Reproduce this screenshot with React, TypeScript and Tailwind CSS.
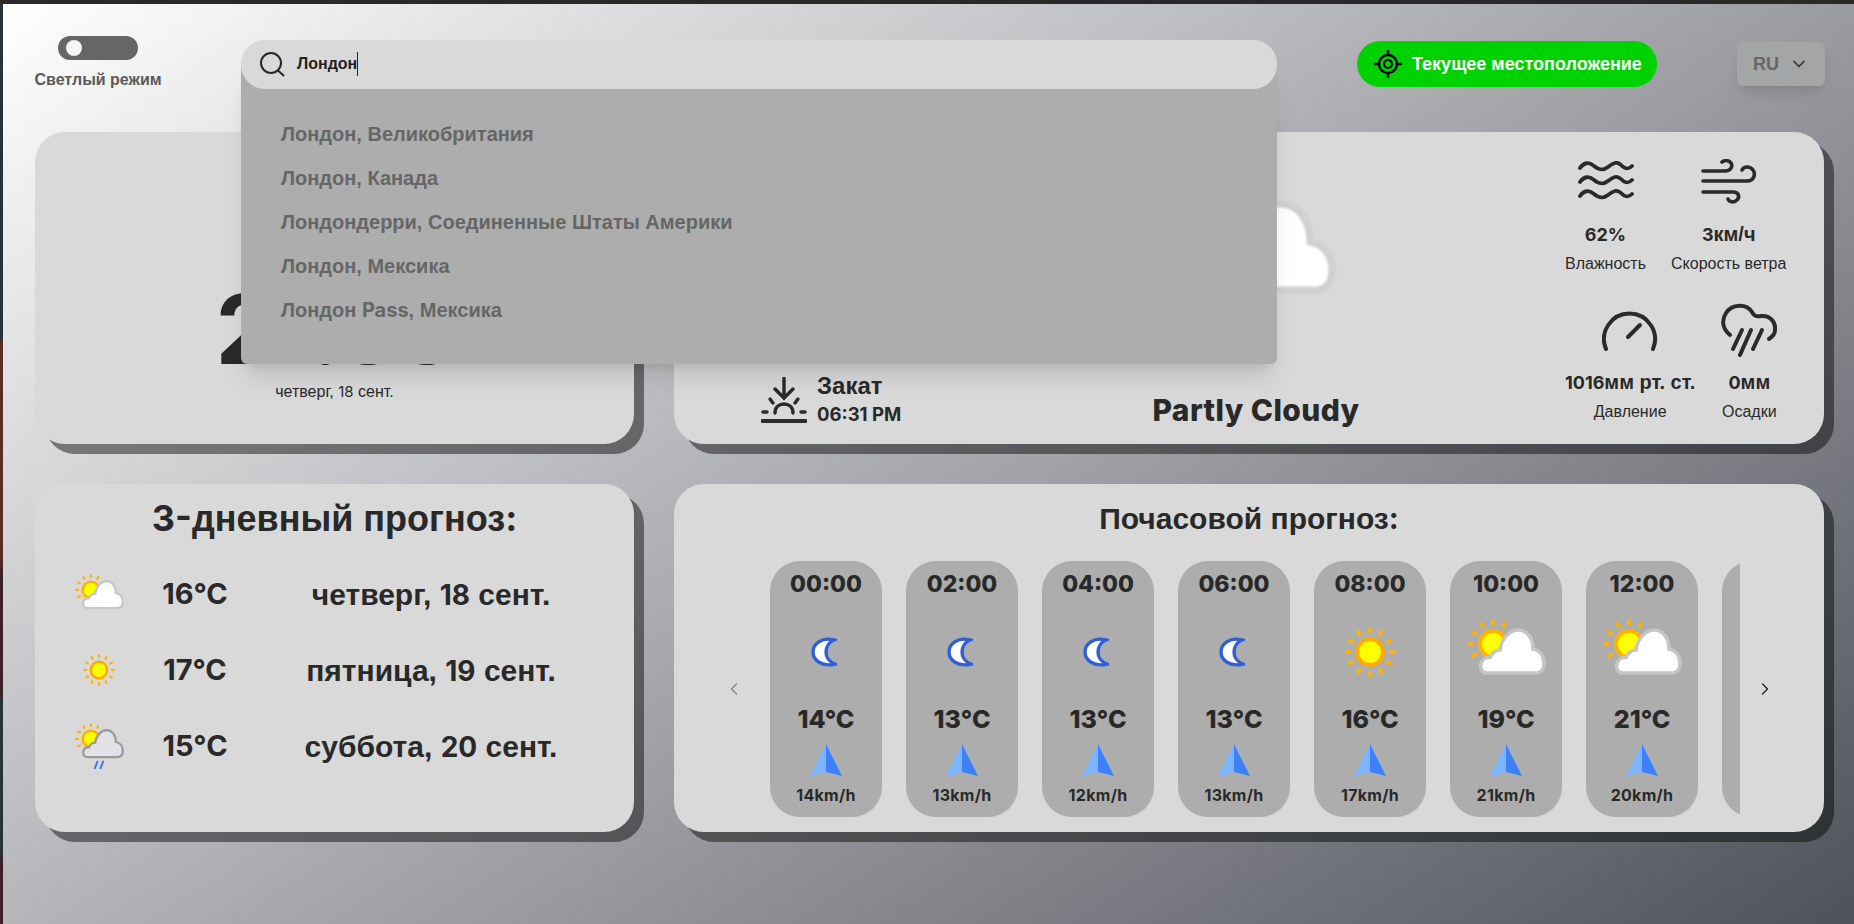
import { ChevronDown, ChevronLeft, ChevronRight } from "lucide-react";

const latin = "font-['Inter',sans-serif]";

const hours = [
  { time: "00:00", icon: "moon", temp: "14", wind: "14" },
  { time: "02:00", icon: "moon", temp: "13", wind: "13" },
  { time: "04:00", icon: "moon", temp: "13", wind: "12" },
  { time: "06:00", icon: "moon", temp: "13", wind: "13" },
  { time: "08:00", icon: "sun", temp: "16", wind: "17" },
  { time: "10:00", icon: "cloud", temp: "19", wind: "21" },
  { time: "12:00", icon: "cloud", temp: "21", wind: "20" },
  { time: "14:00", icon: "cloud", temp: "22", wind: "19" },
];

const days = [
  { icon: "cloud", temp: "16", weekday: "четверг,", day: "18" },
  { icon: "sun", temp: "17", weekday: "пятница,", day: "19" },
  { icon: "rain", temp: "15", weekday: "суббота,", day: "20" },
];

function SunRays() {
  const rays = [0, 30, 60, 90, 120, 150, 180, 210, 240, 270, 300, 330];
  return (
    <g stroke="#ffb300" strokeWidth="3.4">
      {rays.map((a) => (
        <line key={a} x1="27" y1="2" x2="27" y2="8" transform={`rotate(${a} 27 27)`} />
      ))}
    </g>
  );
}

function SunIcon({ size }: { size: number }) {
  return (
    <svg width={size} height={size} viewBox="0 0 54 54">
      <SunRays />
      <circle cx="27" cy="27" r="13" fill="#ffff00" stroke="#ffa800" strokeWidth="4" />
    </svg>
  );
}

function CloudSunIcon({ width, rain = false, soft = false }: { width: number; rain?: boolean; soft?: boolean }) {
  const h = rain ? 76 : 58;
  return (
    <svg width={width} height={(width * h) / 80} viewBox={`0 0 80 ${h}`} className={soft ? "blur-[1px]" : ""}>
      <SunRays />
      <circle cx="27" cy="27" r="13" fill="#ffff00" stroke="#ffb300" strokeWidth="4" />
      <path
        d="M21 56C15 56 14 50 15 47C16 42 20 40 24 40.500C26 35 31 33 34 33C35 22 44 13 52 13C61 13 67 21 67 32C73 33 78 38 78 46C78 52 75 56 70 56Z"
        fill={rain ? "#e3e1e7" : "#ffffff"}
        stroke={rain ? "#9a9a9a" : soft ? "#d0d0d0" : "#c6c6c6"}
        strokeWidth="3.600"
      />
      {rain && (
        <g stroke="#3f73e8" strokeWidth="3">
          <line x1="38" y1="62" x2="33" y2="75" />
          <line x1="47" y1="62" x2="42" y2="75" />
        </g>
      )}
    </svg>
  );
}

function MoonIcon() {
  return (
    <svg width="26" height="30" viewBox="0 0 26 30" className="mr-1 blur-[0.4px]">
      <path
        d="M23 3C12 0 2 6 2 15C2 24 12 30 24 27C18 25 15 20 15 15C15 10 18 5 23 3Z"
        fill="#ffffff"
        stroke="#2f5fd6"
        strokeWidth="3.400"
      />
    </svg>
  );
}

function WeatherIcon({ kind, scale }: { kind: string; scale: "small" | "hour" }) {
  if (kind === "moon") return <MoonIcon />;
  if (kind === "sun") return <SunIcon size={scale === "hour" ? 54 : 34} />;
  if (kind === "rain") return <CloudSunIcon width={50} rain />;
  return (
    <div className={scale === "hour" ? "mb-3" : "mb-1.5"}>
      <CloudSunIcon width={scale === "hour" ? 80 : 50} />
    </div>
  );
}

function WindArrow() {
  return (
    <svg width="32" height="32" viewBox="0 0 32 32">
      <polygon points="16,0 16,28 0,32" fill="#7db4ff" />
      <polygon points="16,0 16,28 32,32" fill="#3b82f6" />
    </svg>
  );
}

function SearchIcon() {
  return (
    <svg width="26" height="26" viewBox="0 0 26 26" fill="none" stroke="#262626" strokeWidth="2">
      <circle cx="12" cy="12" r="10" />
      <line x1="19" y1="19.500" x2="25" y2="25" />
    </svg>
  );
}

function LocateIcon() {
  return (
    <svg width="28" height="28" viewBox="0 0 28 28" fill="none" stroke="#000000">
      <circle cx="14" cy="14" r="9" strokeWidth="2.400" />
      <circle cx="14" cy="14" r="4" strokeWidth="2.200" />
      <g strokeWidth="2.400">
        <line x1="14" y1="0" x2="14" y2="6" />
        <line x1="14" y1="22" x2="14" y2="28" />
        <line x1="0" y1="14" x2="6" y2="14" />
        <line x1="22" y1="14" x2="28" y2="14" />
      </g>
    </svg>
  );
}

function HumidityIcon() {
  const wave = "c4 -6 9 -6 14 -2s9 5 14 1s9 -6 13 -2s7 5 11 1";
  return (
    <svg width="56" height="42" viewBox="0 0 56 42" fill="none" stroke="#2a2a2a" strokeWidth="3.800" strokeLinecap="round">
      <path d={`M2 7${wave}`} />
      <path d={`M2 21${wave}`} />
      <path d={`M2 35${wave}`} />
    </svg>
  );
}

function WindIcon() {
  return (
    <svg width="56" height="46" viewBox="0 0 56 46" fill="none" stroke="#2a2a2a" strokeWidth="3.600" strokeLinecap="round">
      <path d="M2 12H24C30 12 32 7 30 4C28 1 24 1 21 3" />
      <path d="M2 22H46C53 22 55 15 52 11C49 7 43 7 41 11" />
      <path d="M2 33H32C38 33 39 38 36 41C33 44 28 43 27 40" />
    </svg>
  );
}

function GaugeIcon() {
  return (
    <svg width="56" height="44" viewBox="0 0 56 44" fill="none" stroke="#2a2a2a" strokeWidth="4" strokeLinecap="round">
      <path d="M4 41A25.500 25.500 0 1 1 51 41" />
      <line x1="26" y1="29" x2="38" y2="17" />
    </svg>
  );
}

function RainIcon() {
  return (
    <svg width="56" height="54" viewBox="0 0 56 54" fill="none" stroke="#2a2a2a" strokeWidth="4" strokeLinecap="round">
      <path d="M9 32C2 26 0 18 5 10C11 1 25 0 31 9C33 13 35 14 40 13C49 12 55 19 54 27C54 31 51 34 48 36" />
      <line x1="21" y1="27" x2="12" y2="46" />
      <line x1="30" y1="27" x2="19" y2="52" />
      <line x1="41" y1="27" x2="32" y2="46" />
    </svg>
  );
}

function SunsetIcon() {
  return (
    <svg width="46" height="46" viewBox="0 0 46 46" fill="none" stroke="#2a2a2a" strokeWidth="3.400" strokeLinecap="round">
      <path d="M23 1V20" />
      <path d="M14 12L23 21L32 12" />
      <path d="M14 36C14 30 18 27 23 27C28 27 32 30 32 36" />
      <path d="M9 22L12 26" />
      <path d="M37 22L34 26" />
      <path d="M2 35H6" />
      <path d="M40 35H44" />
      <path d="M1.500 44H44.500" strokeWidth="4" />
    </svg>
  );
}

function Stat({ icon, value, label }: { icon: React.ReactNode; value: React.ReactNode; label: string }) {
  return (
    <div className="flex flex-col items-center">
      <div className="flex h-12 items-center">{icon}</div>
      <div className="mt-4 text-[20px] leading-6 font-bold whitespace-nowrap text-[#292929]">{value}</div>
      <div className="mt-[7px] text-[16px] leading-5 whitespace-nowrap text-[#292929]">{label}</div>
    </div>
  );
}

function Header() {
  return (
    <header className="flex h-14 items-center gap-20 pr-[30px] pl-[35px]">
      <div className="flex w-[126px] flex-col items-center gap-[10px] self-start">
        <div className="flex h-6 w-20 items-center rounded-full bg-[#666666] pl-2">
          <div className="size-4 rounded-full bg-[#f4f4f4]" />
        </div>
        <span className="text-[16px] leading-5 font-bold whitespace-nowrap text-[#5a5a5a]">Светлый режим</span>
      </div>

      <div className="relative z-10 w-[1036px]">
        <div className="relative z-10 flex h-[49px] items-center gap-3 rounded-3xl bg-[#d9d9d9] pl-[18px]">
          <SearchIcon />
          <span className="border-r border-[#222222] text-[16px] leading-6 font-bold text-[#222222]">Лондон</span>
        </div>
        <ul className="absolute top-[25px] left-0 w-full rounded-b-md bg-[#adadad] pt-[47px] pr-10 pb-8 pl-10 text-[20px] leading-[44px] font-bold text-[#666666] shadow-xl">
          <li>Лондон, Великобритания</li>
          <li>Лондон, Канада</li>
          <li>Лондондерри, Соединенные Штаты Америки</li>
          <li>Лондон, Мексика</li>
          <li>
            Лондон <span className={latin}>Pass</span>, Мексика
          </li>
        </ul>
      </div>

      <button className="flex h-[46px] w-[300px] items-center gap-2.5 rounded-full bg-[#00d100] pl-[17px] text-[18px] font-bold whitespace-nowrap text-white">
        <LocateIcon />
        Текущее местоположение
      </button>

      <button className="flex h-11 w-[88px] items-center justify-center gap-2.5 rounded-md bg-[#a4a5a7] text-[18px] font-bold text-[#666666] shadow-lg">
        RU
        <ChevronDown size={20} className="text-[#333333]" />
      </button>
    </header>
  );
}

export default function App() {
  return (
    <div className="flex min-h-[924px] flex-col overflow-hidden bg-[#292929] font-['Liberation_Sans',sans-serif]">
      <div className="h-1 shrink-0" />
      <div className="flex h-[920px]">
        <div className="w-[3px] shrink-0 bg-[linear-gradient(to_bottom,#25343c_0%,#25343c_36%,#5b2e20_37%,#5b2e20_60%,#3b2226_62%,#3b2226_75%,#24363a_76%,#24363a_92%,#3b2226_93%)]" />
        <main className="flex-1 bg-[linear-gradient(146deg,#ffffff,#4f525a)] pt-8 pl-0">
          <div className="-ml-[3px]">
            <Header />

            <div className="mt-10 flex gap-10 pl-[35px]">
              <section className="flex h-[312px] w-[599px] flex-col items-center rounded-[30px] bg-[#d9d9d9] pt-[149px] text-[#292929] shadow-[10px_10px_0_rgba(0,0,0,0.45)]">
                <div className={`${latin} text-[96px] leading-[96px] font-bold tracking-[-4px]`}>21:36</div>
                <div className="mt-[5px] text-[16px] leading-5">
                  четверг, <span className={`${latin} text-[15px]`}>18</span> сент.
                </div>
              </section>

              <section className="flex h-[312px] w-[1150px] rounded-[30px] bg-[#d9d9d9] text-[#292929] shadow-[10px_10px_0_rgba(0,0,0,0.45)]">
                <div className="flex w-[400px] items-end pb-4 pl-[87px]">
                  <div className="flex items-center gap-2.5">
                    <SunsetIcon />
                    <div>
                      <div className="text-[24px] leading-7 font-bold">Закат</div>
                      <div className={`${latin} text-[18.500px] leading-7 font-bold`}>06:31 PM</div>
                    </div>
                  </div>
                </div>
                <div className="flex w-[364px] flex-col items-center pt-[46px]">
                  <CloudSunIcon width={160} soft />
                  <div className={`${latin} mt-[95px] text-[30px] leading-[42px] font-extrabold tracking-[0.4px] whitespace-nowrap`}>Partly Cloudy</div>
                </div>
                <div className="ml-[127px] flex flex-col gap-8 pt-[26px]">
                  <div className="flex gap-[25px]">
                    <Stat icon={<HumidityIcon />} value={<span className={`${latin} text-[18px]`}>62%</span>} label="Влажность" />
                    <Stat
                      icon={<WindIcon />}
                      value={
                        <>
                          <span className={`${latin} text-[18px]`}>3</span>км/ч
                        </>
                      }
                      label="Скорость ветра"
                    />
                  </div>
                  <div className="flex gap-[26px]">
                    <Stat
                      icon={<GaugeIcon />}
                      value={
                        <>
                          <span className={`${latin} text-[18px]`}>1016</span>мм рт. ст.
                        </>
                      }
                      label="Давление"
                    />
                    <Stat
                      icon={<RainIcon />}
                      value={
                        <>
                          <span className={`${latin} text-[18px]`}>0</span>мм
                        </>
                      }
                      label="Осадки"
                    />
                  </div>
                </div>
              </section>
            </div>

            <div className="mt-10 flex gap-10 pl-[35px]">
              <section className="h-[348px] w-[599px] rounded-[30px] bg-[#d9d9d9] pt-3.5 text-[#292929] shadow-[10px_10px_0_rgba(0,0,0,0.45)]">
                <h2 className="text-center text-[36px] leading-10 font-bold">
                  <span className={latin}>3-</span>дневный прогноз<span className={latin}>:</span>
                </h2>
                <div className="mt-[17px] pl-[29px]">
                  {days.map((d) => (
                    <div key={d.day} className="grid h-[76px] grid-cols-[70px_122px_350px] items-center text-center font-bold">
                      <div className="flex justify-center">
                        <WeatherIcon kind={d.icon} scale="small" />
                      </div>
                      <div className={`${latin} text-[29px]`}>{d.temp}°C</div>
                      <div className="text-[30px] whitespace-nowrap">
                        {d.weekday} <span className={`${latin} text-[28px]`}>{d.day}</span> сент.
                      </div>
                    </div>
                  ))}
                </div>
              </section>

              <section className="h-[348px] w-[1150px] rounded-[30px] bg-[#d9d9d9] pt-3.5 text-[#292929] shadow-[10px_10px_0_rgba(0,0,0,0.45)]">
                <h2 className="text-center text-[30px] leading-10 font-bold">
                  Почасовой прогноз<span className={latin}>:</span>
                </h2>
                <div className="mt-[22px] flex items-center pl-[50px]">
                  <ChevronLeft size={20} strokeWidth={1.5} className="shrink-0 text-[#808080]" />
                  <div className="ml-[26px] flex w-[970px] shrink-0 gap-6 overflow-hidden">
                    {hours.map((h) => (
                      <div key={h.time} className={`${latin} flex h-64 w-28 shrink-0 flex-col items-center rounded-[30px] bg-[#adadad] pt-[7px] font-bold`}>
                        <div className="text-[23px] leading-8 font-extrabold">{h.time}</div>
                        <div className="flex h-[103px] items-center">
                          <WeatherIcon kind={h.icon} scale="hour" />
                        </div>
                        <div className="text-[25px] leading-8 font-extrabold">{h.temp}°C</div>
                        <div className="mt-[9px]">
                          <WindArrow />
                        </div>
                        <div className="mt-[9px] text-[16px] leading-5 font-bold tracking-[0.3px]">{h.wind}km/h</div>
                      </div>
                    ))}
                  </div>
                  <ChevronRight size={20} strokeWidth={1.5} className="ml-[15px] shrink-0 text-[#222222]" />
                </div>
              </section>
            </div>
          </div>
        </main>
      </div>
    </div>
  );
}
